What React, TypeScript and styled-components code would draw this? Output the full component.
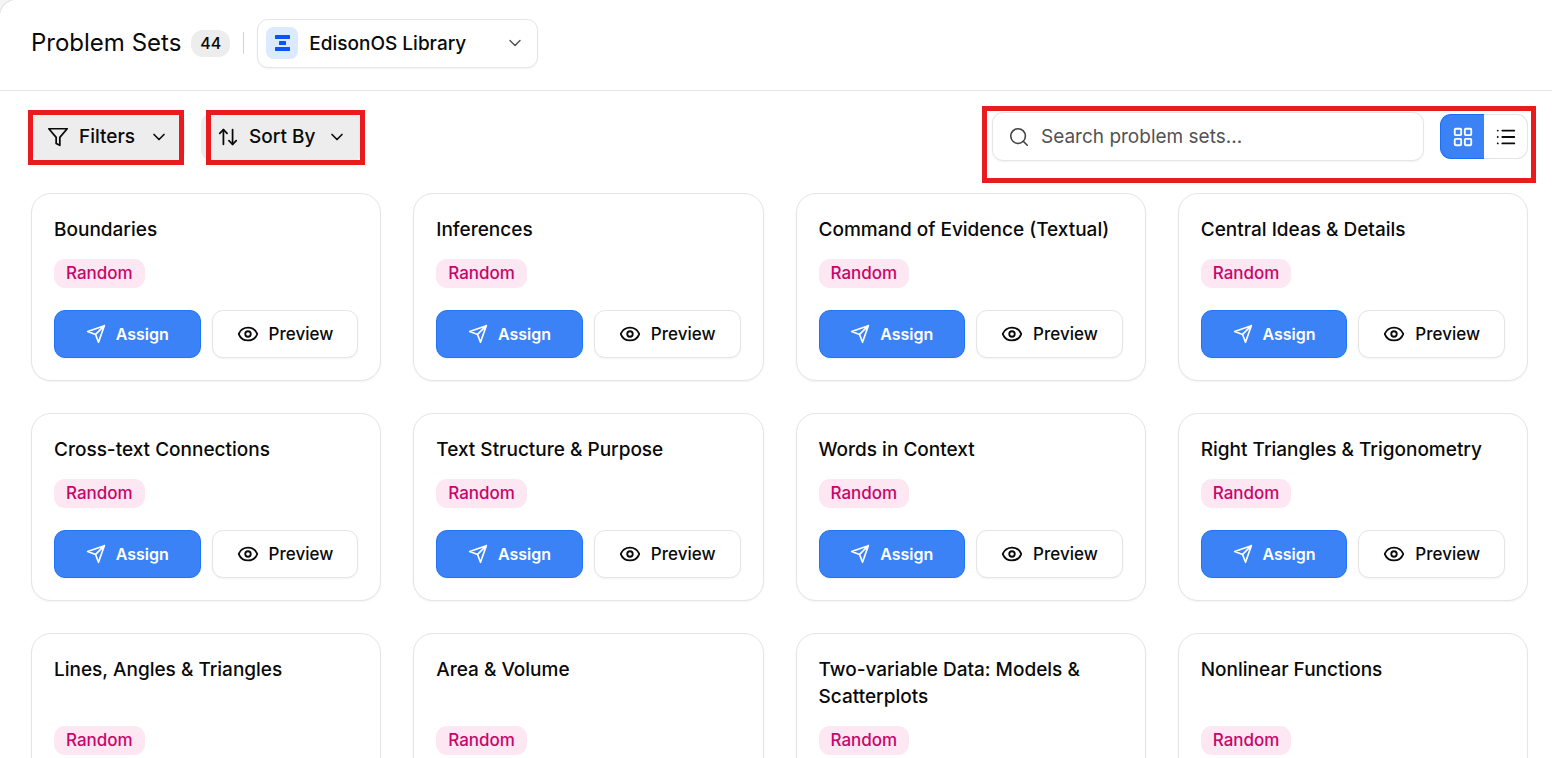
import React from "react";
import styled, { createGlobalStyle, css } from "styled-components";
import { ChevronDown, Eye, LayoutGrid, List, Search, ArrowUpDown } from "lucide-react";

const GlobalStyle = createGlobalStyle`
  *, *::before, *::after { box-sizing: border-box; }
  html { scrollbar-width: none; }
  body {
    margin: 0;
    background: #f5f5f5;
    color: #0a0a0a;
    font-family: Inter, "Liberation Sans", sans-serif;
  }
  button, input { font: inherit; color: inherit; }
  h1, h2 { margin: 0; font-weight: 500; }
`;

const Page = styled.div`
  min-height: 100vh;
  background: #ffffff;
  border-top-left-radius: 16px;
  box-shadow: 0 0 0 1px #e2e2e2;
`;

const Header = styled.header`
  display: flex;
  align-items: center;
  height: 91px;
  padding: 0 24px 4px 31px;
  border-bottom: 1px solid #e5e5e5;
`;

const Title = styled.h1`
  font-size: 24px;
  line-height: 32px;
  font-weight: 400;
`;

const Count = styled.span`
  margin-left: 10px;
  padding: 0 9px;
  border-radius: 12px;
  background: #ededed;
  font-size: 16px;
  line-height: 27px;
  font-weight: 500;
`;

const Divider = styled.span`
  width: 1px;
  height: 22px;
  margin: 0 13px;
  background: #d4d4d4;
`;

const outlined = css`
  border: 1px solid #e5e5e5;
  background: #ffffff;
  box-shadow: 0 1px 2px rgba(0, 0, 0, 0.05);
`;

const LibraryButton = styled.button`
  ${outlined}
  display: flex;
  align-items: center;
  gap: 11px;
  width: 281px;
  height: 49px;
  padding: 0 12px 0 8px;
  border-radius: 11px;
  font-size: 19px;
  font-weight: 500;
  text-align: left;
`;

const LibraryName = styled.span`
  flex: 1;
`;

const Logo = styled.span`
  display: grid;
  place-items: center;
  width: 32px;
  height: 32px;
  border-radius: 8px;
  background: #dbeafe;
`;

const Main = styled.main`
  padding: 21px 24px 32px 31px;
`;

const Toolbar = styled.div`
  display: flex;
  align-items: center;
  gap: 16px;
  margin-bottom: 32px;
`;

const Highlight = styled.div<{ $inset: string }>`
  position: relative;
  display: flex;
  align-items: center;
  gap: 16px;

  &::after {
    content: "";
    position: absolute;
    inset: ${(p) => p.$inset};
    border: 5px solid #e81c1e;
    pointer-events: none;
  }
`;

const Spacer = styled.div`
  flex: 1;
`;

const MenuButton = styled.button<{ $width: number }>`
  display: flex;
  align-items: center;
  gap: 10px;
  width: ${(p) => p.$width}px;
  height: 48px;
  padding: 0 16px;
  border: 0;
  border-radius: 11px;
  background: #ededed;
  font-size: 19px;
  font-weight: 500;
  white-space: nowrap;
`;

const MenuLabel = styled.span`
  flex: 1;
  text-align: left;
`;

const SearchBox = styled.label`
  ${outlined}
  display: flex;
  align-items: center;
  gap: 11px;
  width: 432px;
  height: 49px;
  padding: 0 15px;
  border-radius: 11px;
  color: #404040;
`;

const SearchInput = styled.input`
  flex: 1;
  min-width: 0;
  padding: 0;
  border: 0;
  outline: 0;
  background: none;
  font-size: 19px;
  &::placeholder { color: #525252; opacity: 1; }
`;

const ViewToggle = styled.div`
  display: flex;
  height: 45px;
  width: 88px;
`;

const ViewButton = styled.button<{ $active?: boolean }>`
  flex: 1;
  display: grid;
  place-items: center;
  padding: 0;
  border: 1px solid ${(p) => (p.$active ? "#1a6ff5" : "#e5e5e5")};
  background: ${(p) => (p.$active ? "#3b82f6" : "#ffffff")};
  color: ${(p) => (p.$active ? "#ffffff" : "#0a0a0a")};
  &:first-child { border-right: 0; border-radius: 11px 0 0 11px; }
  &:last-child { border-left: 0; border-radius: 0 11px 11px 0; }
`;

const Grid = styled.div`
  display: grid;
  grid-template-columns: repeat(4, minmax(0, 1fr));
  gap: 32px;
`;

const Card = styled.article`
  ${outlined}
  display: flex;
  flex-direction: column;
  align-items: flex-start;
  padding: 22px;
  border-radius: 20px;
`;

const CardTitle = styled.h2`
  margin-bottom: 16px;
  font-size: 19px;
  line-height: 27px;
`;

const Tag = styled.span`
  margin-top: auto;
  padding: 0 12px;
  border-radius: 11px;
  background: #fce7f3;
  color: #c9056a;
  font-size: 17px;
  line-height: 29px;
  font-weight: 500;
`;

const Actions = styled.div`
  display: grid;
  grid-template-columns: 1fr 1fr;
  gap: 11px;
  width: 100%;
  margin-top: 22px;
`;

const ActionButton = styled.button<{ $primary?: boolean }>`
  ${outlined}
  display: flex;
  align-items: center;
  justify-content: center;
  gap: 10px;
  height: 48px;
  padding: 0;
  border-radius: 11px;
  font-size: 17px;
  font-weight: 500;
  ${(p) =>
    p.$primary &&
    css`
      border-color: #1f75f5;
      background: #3b82f6;
      color: #ffffff;
      font-size: 16px;
      font-weight: 600;
    `}
`;

const FilterIcon = () => (
  <svg width="22" height="22" viewBox="0 0 24 24" fill="none" stroke="currentColor" strokeWidth="1.9" strokeLinejoin="round" aria-hidden="true">
    <path d="M22 3H2l8 9.46V19l4 2v-8.54L22 3Z" />
  </svg>
);

const SendIcon = () => (
  <svg width="20" height="20" viewBox="0 0 24 24" fill="none" stroke="currentColor" strokeWidth="2" strokeLinecap="round" strokeLinejoin="round" aria-hidden="true">
    <path d="M22 2 15 22l-3.5-9.5L2 9 22 2ZM22 2 11.5 12.5" />
  </svg>
);

const LibraryLogo = () => (
  <svg width="15" height="16" viewBox="0 0 15 16" fill="#0b53ff" aria-hidden="true">
    <rect width="15" height="4" rx="0.5" />
    <rect x="4" y="6" width="7" height="4" rx="0.5" />
    <rect y="12" width="15" height="4" rx="0.5" />
  </svg>
);

const problemSets = [
  "Boundaries",
  "Inferences",
  "Command of Evidence (Textual)",
  "Central Ideas & Details",
  "Cross-text Connections",
  "Text Structure & Purpose",
  "Words in Context",
  "Right Triangles & Trigonometry",
  "Lines, Angles & Triangles",
  "Area & Volume",
  "Two-variable Data: Models & Scatterplots",
  "Nonlinear Functions",
];

export default function App() {
  return (
    <>
      <GlobalStyle />
      <Page>
        <Header>
          <Title>Problem Sets</Title>
          <Count>44</Count>
          <Divider />
          <LibraryButton>
            <Logo><LibraryLogo /></Logo>
            <LibraryName>EdisonOS Library</LibraryName>
            <ChevronDown size={20} strokeWidth={1.7} color="#525252" />
          </LibraryButton>
        </Header>
        <Main>
          <Toolbar>
            <Highlight $inset="-3px 1px -4px -3px">
              <MenuButton $width={154}>
                <FilterIcon />
                <MenuLabel>Filters</MenuLabel>
                <ChevronDown size={20} strokeWidth={2} />
              </MenuButton>
            </Highlight>
            <Highlight $inset="-3px -2px -4px 5px">
              <MenuButton $width={162}>
                <ArrowUpDown size={22} strokeWidth={1.9} />
                <MenuLabel>Sort By</MenuLabel>
                <ChevronDown size={20} strokeWidth={2} />
              </MenuButton>
            </Highlight>
            <Spacer />
            <Highlight $inset="-6px -8px -22px -10px">
              <SearchBox>
                <Search size={22} strokeWidth={1.7} />
                <SearchInput aria-label="Search problem sets" placeholder="Search problem sets..." />
              </SearchBox>
              <ViewToggle>
                <ViewButton $active aria-label="Grid view"><LayoutGrid size={22} strokeWidth={2} /></ViewButton>
                <ViewButton aria-label="List view"><List size={22} strokeWidth={2} /></ViewButton>
              </ViewToggle>
            </Highlight>
          </Toolbar>
          <Grid>
            {problemSets.map((name) => (
              <Card key={name}>
                <CardTitle>{name}</CardTitle>
                <Tag>Random</Tag>
                <Actions>
                  <ActionButton $primary><SendIcon />Assign</ActionButton>
                  <ActionButton><Eye size={22} strokeWidth={2} />Preview</ActionButton>
                </Actions>
              </Card>
            ))}
          </Grid>
        </Main>
      </Page>
    </>
  );
}
